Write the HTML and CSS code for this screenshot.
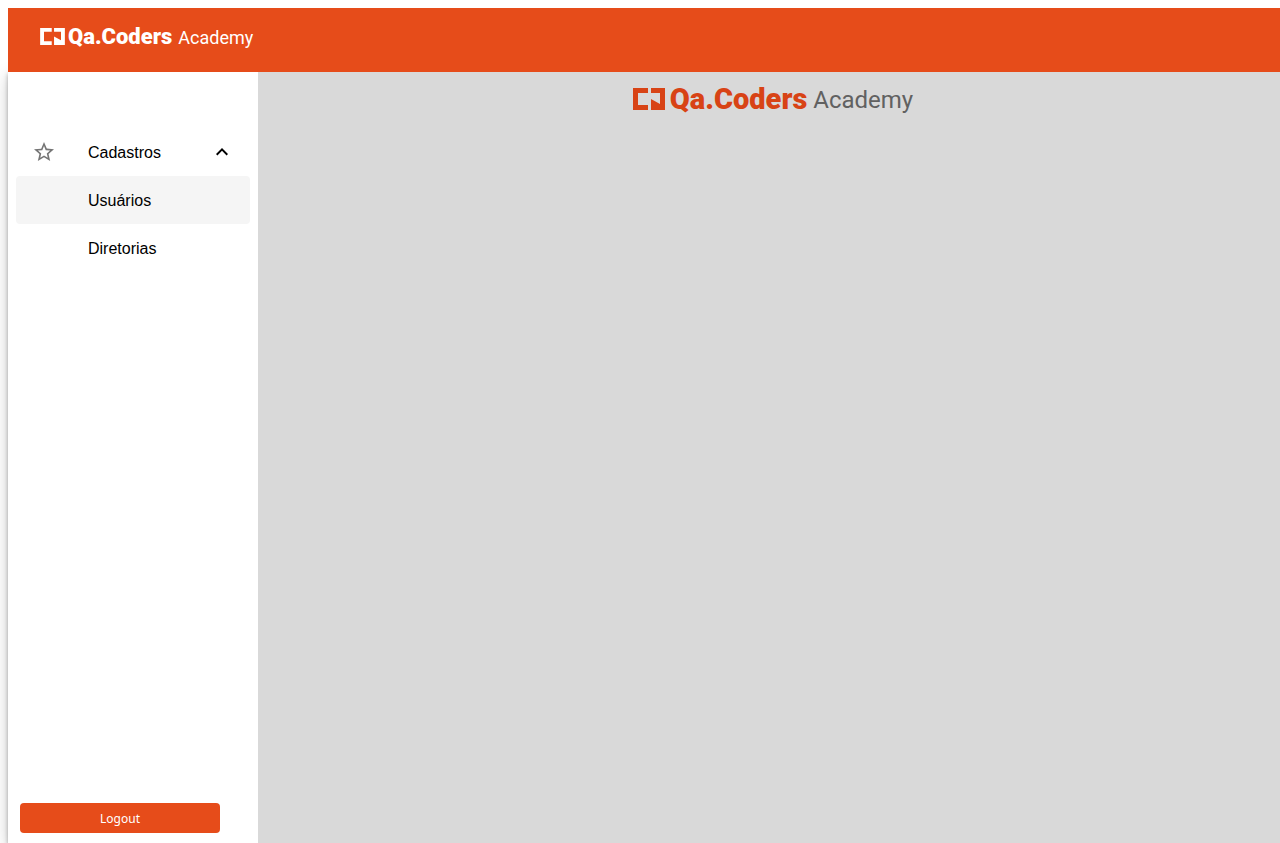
FILE: index.html
```html
<!DOCTYPE html>
<html lang="pt-BR">
<head>
<meta charset="utf-8">
<title>Qa.Coders Academy</title>
<link rel="stylesheet" href="styles.css">
</head>
<body>
<div class="app">
  <header class="topbar">
    <a class="logo logo-light" href="#">
      <svg class="logo-mark" viewBox="0 0 32 22" aria-hidden="true"><path d="M0 0h15v5H5v12h10v5H0zM18 0h14v22H18V11l9 5V5h-9z"/></svg>
      <span class="logo-name">Qa.Coders</span>
      <span class="logo-sub">Academy</span>
    </a>
  </header>
  <div class="body">
    <nav class="sidebar">
      <div class="menu">
        <button class="item" type="button" aria-expanded="true">
          <svg class="star" viewBox="0 0 24 24" aria-hidden="true"><path d="m22 9.24-7.19-.62L12 2 9.19 8.63 2 9.24l5.46 4.73L5.82 21 12 17.27 18.18 21l-1.63-7.03L22 9.24zM12 15.4l-3.76 2.27 1-4.28-3.32-2.88 4.38-.38L12 6.1l1.71 4.04 4.38.38-3.32 2.88 1 4.28L12 15.4z"/></svg>
          <span class="label">Cadastros</span>
          <svg class="chevron" viewBox="0 0 24 24" aria-hidden="true"><path d="m12 8-6 6 1.41 1.41L12 10.83l4.59 4.58L18 14z"/></svg>
        </button>
        <a class="item item-sub item-active" href="#"><span class="label">Usuários</span></a>
        <a class="item item-sub" href="#"><span class="label">Diretorias</span></a>
      </div>
      <button class="logout" type="button">Logout</button>
    </nav>
    <main class="content">
      <div class="logo logo-large">
        <svg class="logo-mark" viewBox="0 0 32 22" aria-hidden="true"><path d="M0 0h15v5H5v12h10v5H0zM18 0h14v22H18V11l9 5V5h-9z"/></svg>
        <span class="logo-name">Qa.Coders</span>
        <span class="logo-sub">Academy</span>
      </div>
    </main>
  </div>
</div>
</body>
</html>
```
FILE: styles.css
```css
* { box-sizing: border-box; }
body {
  margin: 0;
  padding: 8px 0 0 8px;
  overflow: hidden;
  background: #fff;
  color: #000;
  font-family: "Liberation Sans", Arial, sans-serif;
  font-size: 16px;
}
.app {
  display: flex;
  flex-direction: column;
  width: 100vw;
  height: calc(100vh - 8px);
}
.topbar {
  position: relative;
  z-index: 2;
  display: flex;
  align-items: flex-start;
  flex: none;
  height: 64px;
  padding: 16px 32px;
  background: #e64c1a;
}
.body { display: flex; flex: 1; min-height: 0; }
.sidebar {
  position: relative;
  display: flex;
  flex-direction: column;
  justify-content: space-between;
  flex: none;
  width: 250px;
  padding: 56px 8px 10px;
  background: #fff;
  box-shadow: 0 2px 4px rgba(0, 0, 0, 0.3), 0 4px 16px rgba(0, 0, 0, 0.2);
}
.menu { display: flex; flex-direction: column; }
.item {
  display: flex;
  align-items: center;
  width: 100%;
  height: 48px;
  padding: 0 16px;
  border: 0;
  border-radius: 4px;
  background: none;
  color: inherit;
  font: inherit;
  text-align: left;
  text-decoration: none;
  cursor: pointer;
}
.item-sub { padding-left: 72px; }
.item-active { background: #f5f5f5; }
.star { width: 24px; height: 24px; margin-right: 32px; fill: #757575; }
.label { flex: 1; padding-top: 2px; }
.chevron { width: 24px; height: 24px; }
.logout {
  width: 200px;
  height: 30px;
  margin-left: 4px;
  border: 0;
  border-radius: 4px;
  background: #e64c1a;
  color: #fff;
  font: 12px "Noto Sans", sans-serif;
  cursor: pointer;
}
.content {
  position: relative;
  display: flex;
  justify-content: center;
  align-items: flex-start;
  flex: 1;
  padding-top: 12px;
  background: #d9d9d9;
}
.logo {
  display: flex;
  align-items: center;
  font-family: Roboto, sans-serif;
  text-decoration: none;
}
.logo-name { font-weight: 900; }
.logo-sub { padding-top: 2px; font-weight: 400; }
.logo-light { color: #fff; line-height: 23px; }
.logo-light .logo-mark { width: 25px; height: 17px; margin-right: 3px; fill: #fff; }
.logo-light .logo-name { font-size: 22px; }
.logo-light .logo-sub { margin-left: 6px; font-size: 18px; }
.logo-large { color: #616161; line-height: 28px; }
.logo-large .logo-mark { width: 32px; height: 22px; margin-right: 5px; fill: #d84315; }
.logo-large .logo-name { color: #d84315; font-size: 29px; }
.logo-large .logo-sub { margin-left: 6px; font-size: 24px; }
```
